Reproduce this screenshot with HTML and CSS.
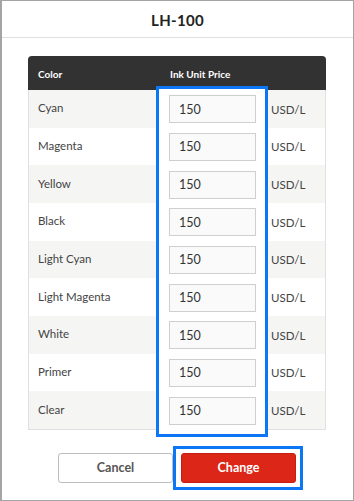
FILE: index.html
```html
<!DOCTYPE html>
<html lang="en">
<head>
<meta charset="utf-8">
<title>LH-100</title>
<link rel="stylesheet" href="styles.css">
</head>
<body>
<div class="dialog">
  <div class="dialog-title">LH-100</div>
  <div class="dialog-body">
    <div class="price-table">
      <div class="focus-col"></div>
      <div class="thead">
        <div class="col-color">Color</div>
        <div class="col-price">Ink Unit Price</div>
      </div>
      <div class="row"><div class="col-color">Cyan</div><div class="col-price"><input class="price-input" value="150"></div><div class="unit">USD/L</div></div>
      <div class="row"><div class="col-color">Magenta</div><div class="col-price"><input class="price-input" value="150"></div><div class="unit">USD/L</div></div>
      <div class="row"><div class="col-color">Yellow</div><div class="col-price"><input class="price-input" value="150"></div><div class="unit">USD/L</div></div>
      <div class="row"><div class="col-color">Black</div><div class="col-price"><input class="price-input" value="150"></div><div class="unit">USD/L</div></div>
      <div class="row"><div class="col-color">Light Cyan</div><div class="col-price"><input class="price-input" value="150"></div><div class="unit">USD/L</div></div>
      <div class="row"><div class="col-color">Light Magenta</div><div class="col-price"><input class="price-input" value="150"></div><div class="unit">USD/L</div></div>
      <div class="row"><div class="col-color">White</div><div class="col-price"><input class="price-input" value="150"></div><div class="unit">USD/L</div></div>
      <div class="row"><div class="col-color">Primer</div><div class="col-price"><input class="price-input" value="150"></div><div class="unit">USD/L</div></div>
      <div class="row"><div class="col-color">Clear</div><div class="col-price"><input class="price-input" value="150"></div><div class="unit">USD/L</div></div>
    </div>
    <div class="actions">
      <button class="btn btn-cancel">Cancel</button>
      <div class="btn-focus">
        <button class="btn btn-change">Change</button>
      </div>
    </div>
  </div>
</div>
</body>
</html>
```
FILE: styles.css
```css
* { box-sizing: border-box; }
html, body { margin: 0; padding: 0; }
body {
  width: 354px;
  height: 501px;
  background: #fff;
  font-family: "Lato", "Noto Sans", sans-serif;
  color: #333;
}
.dialog {
  width: 354px;
  height: 501px;
  border: 1px solid #a4a4a4;
  border-left-width: 2px;
  background: #fff;
}
.dialog-title {
  height: 37px;
  border-bottom: 1px solid #e2dede;
  display: flex;
  align-items: center;
  justify-content: center;
  font-size: 15px;
  font-weight: 700;
  color: #222;
  letter-spacing: 0.3px;
  padding-top: 1px;
}
.dialog-body {
  padding: 18px 26px 0 26px;
}
.price-table {
  position: relative;
  width: 298px;
  border: 1px solid #e0e0e0;
  border-top: none;
  border-radius: 4px 4px 0 0;
}
.focus-col {
  position: absolute;
  left: 127px;
  top: 30px;
  width: 112px;
  height: 351px;
  border: 3px solid #0b76f6;
  background: #fff;
  z-index: 1;
}
.thead {
  display: flex;
  align-items: center;
  height: 34px;
  margin: 0 -1px;
  background: #323232;
  border-radius: 4px 4px 0 0;
  color: #fff;
  font-size: 10px;
  font-weight: 700;
}
.thead .col-color { width: 142px; padding-left: 10px; padding-top: 1px; }
.thead .col-price { padding-top: 1px; }
.row {
  display: flex;
  align-items: center;
  height: 37.67px;
  font-size: 11.5px;
  color: #444;
}
.row:nth-child(odd) { background: #f5f5f3; }
.row .col-color { width: 140px; padding-left: 9px; padding-bottom: 2px; }
.row .col-price { position: relative; z-index: 2; width: 102px; }
.price-input {
  width: 87px;
  height: 28px;
  border: 1px solid #cfcfcf;
  background: #fafafa;
  padding: 0 0 0 9px;
  font-family: "Lato", "Noto Sans", sans-serif;
  font-size: 12.5px;
  color: #333;
  margin-top: 1px;
}
.unit { font-size: 11.5px; color: #444; padding-top: 1px; }
.actions {
  display: flex;
  justify-content: center;
  gap: 8px;
  margin-top: 23px;
  padding-right: 1px;
}
.btn {
  width: 115px;
  height: 30px;
  border-radius: 3px;
  font-family: "Lato", "Noto Sans", sans-serif;
  font-size: 12.5px;
  font-weight: 700;
  cursor: pointer;
}
.btn-cancel {
  background: #fff;
  border: 1px solid #bdbdbd;
  color: #555;
}
.btn-focus {
  position: relative;
  width: 115px;
  height: 30px;
}
.btn-focus::before {
  content: "";
  position: absolute;
  left: -8px;
  top: -7px;
  right: -7px;
  bottom: -7px;
  border: 3px solid #0b76f6;
  background: #fff;
}
.btn-change {
  position: relative;
  background: #dc2617;
  border: 1px solid #c81e12;
  color: #fff;
}
```
